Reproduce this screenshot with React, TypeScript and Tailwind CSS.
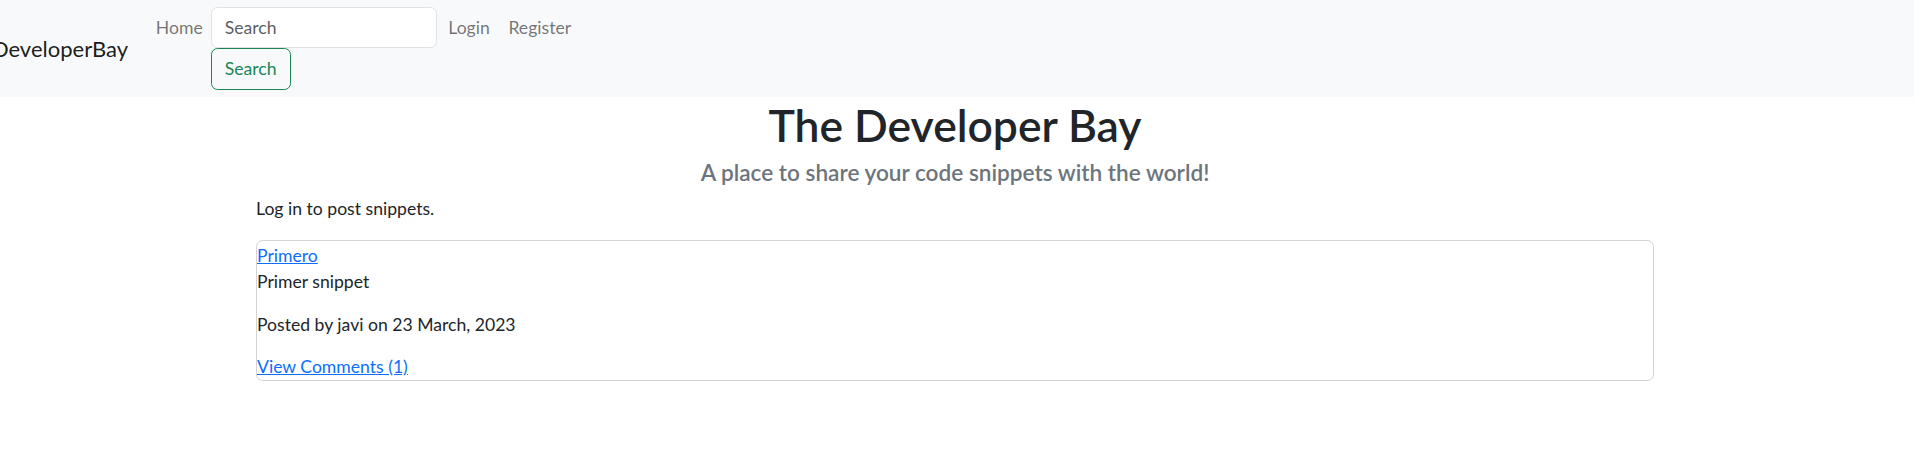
export default function App() {
  return (
    <div className="min-h-[469px] bg-white text-[#212529] text-[17.6px] leading-[26px] font-['Lato','Noto_Sans',sans-serif]">
      <nav className="h-[97px] bg-[#f8f9fa] flex items-center py-[6.5px]">
        <a className="w-[128px] mr-[19px] flex justify-end whitespace-nowrap text-[22px] leading-[33px] text-[rgba(0,0,0,0.9)]">
          DeveloperBay
        </a>
        <ul className="flex items-start self-start">
          <li>
            <a className="block px-[8.8px] py-[8.8px] leading-[26.4px] text-[rgba(0,0,0,0.55)]">Home</a>
          </li>
          <li>
            <form className="w-[226px] -ml-[1px] flex flex-col items-start">
              <input
                placeholder="Search"
                className="w-[226px] h-[41.8px] px-[13.2px] bg-white border border-[#dee2e6] rounded-[6.6px] text-[17.6px] placeholder:text-[rgba(33,37,41,0.75)] outline-none"
              />
              <button
                type="button"
                className="w-[80px] h-[41.8px] px-[13.2px] text-left border border-[#198754] rounded-[6.6px] text-[#198754] bg-transparent"
              >
                Search
              </button>
            </form>
          </li>
          <li>
            <a className="block ml-[3px] px-[8.8px] py-[8.8px] leading-[26.4px] text-[rgba(0,0,0,0.55)]">Login</a>
          </li>
          <li>
            <a className="block ml-[1px] px-[8.8px] py-[8.8px] leading-[26.4px] text-[rgba(0,0,0,0.55)]">Register</a>
          </li>
        </ul>
      </nav>
      <main className="ml-[256px] w-[1398px]">
        <h1 className="mt-[2px] mb-[8.5px] text-center text-[44.4px] leading-[52.8px] font-semibold">The Developer Bay</h1>
        <h5 className="mb-[9.5px] text-center text-[22.6px] leading-[26.4px] font-semibold text-[#6c757d]">
          A place to share your code snippets with the world!
        </h5>
        <p className="mb-[18.1px]">Log in to post snippets.</p>
        <div className="border border-[#d3d3d3] rounded-[6.6px] pt-[1.5px]">
          <a className="block text-[#0d6efd] underline">Primero</a>
          <p className="mb-[17.5px]">Primer snippet</p>
          <p className="mb-[16px]">Posted by javi on 23 March, 2023</p>
          <a className="block text-[#0d6efd] underline">View Comments (1)</a>
        </div>
      </main>
    </div>
  );
}
